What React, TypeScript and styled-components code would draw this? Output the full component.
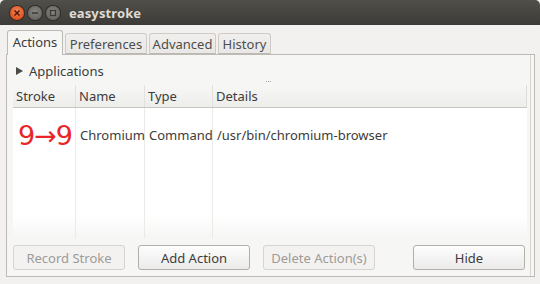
import React from "react";
import styled, { createGlobalStyle } from "styled-components";

const Global = createGlobalStyle`
  html, body { margin: 0; padding: 0; background: #f2f1f0; }
  body { font-family: "Noto Sans", "DejaVu Sans", sans-serif; }
`;

const Win = styled.div`
  width: 540px;
  height: 284px;
  display: flex;
  flex-direction: column;
  background: #f2f1f0;
  overflow: hidden;
`;

const TitleBar = styled.div`
  height: 25px;
  flex: none;
  display: flex;
  align-items: center;
  padding-left: 10px;
  gap: 2px;
  background: linear-gradient(#514f4a, #3c3b37);
  border-radius: 5px 5px 0 0;
`;

const WinBtn = styled.span<{ $kind: "close" | "min" | "max" }>`
  width: 14px;
  height: 14px;
  border-radius: 50%;
  display: inline-flex;
  align-items: center;
  justify-content: center;
  background: ${(p) =>
    p.$kind === "close"
      ? "radial-gradient(circle at 50% 40%, #f48a5a, #e0501e 70%, #b83c12)"
      : "radial-gradient(circle at 50% 40%, #85847f, #67665f 75%, #55544e)"};
  box-shadow: 0 0 0 1px #2e2d2a;
  margin-right: 2px;
`;

const Title = styled.span`
  margin-left: 5px;
  color: #dfdbd2;
  font-weight: bold;
  font-size: 13px;
  letter-spacing: 0.1px;
`;

const Body = styled.div`
  flex: 1;
  display: flex;
  flex-direction: column;
  padding: 5px 5px 7px 6px;
`;

const Tabs = styled.div`
  display: flex;
  align-items: flex-end;
  gap: 2px;
  padding-left: 1px;
  height: 24px;
  position: relative;
  z-index: 1;
`;

const Tab = styled.div<{ $active?: boolean; $w: number }>`
  width: ${(p) => p.$w}px;
  height: ${(p) => (p.$active ? 25 : 21)}px;
  box-sizing: border-box;
  border: 1px solid ${(p) => (p.$active ? "#bdbab4" : "#cfccc7")};
  border-bottom: ${(p) => (p.$active ? "none" : "1px solid #bdbab4")};
  border-radius: 3px 3px 0 0;
  background: ${(p) => (p.$active ? "#f6f6f5" : "linear-gradient(#f0efee, #e9e8e6)")};
  color: ${(p) => (p.$active ? "#3c3c3c" : "#4e4d4b")};
  font-size: 13px;
  display: flex;
  align-items: center;
  justify-content: center;
  padding-bottom: ${(p) => (p.$active ? 2 : 0)}px;
  margin-bottom: ${(p) => (p.$active ? -1 : 0)}px;
`;

const Page = styled.div`
  flex: 1;
  display: flex;
  flex-direction: column;
  border: 1px solid #bdbab4;
  background: #f6f6f5;
  padding: 6px 3px 6px 6px;
  box-shadow: inset -3px 0 0 #f6f6f5, inset -4px 0 0 #d8d6d2;
`;

const Expander = styled.div`
  display: flex;
  align-items: center;
  height: 20px;
  margin-left: 3px;
  color: #3c3c3c;
  font-size: 13px;
  gap: 6px;
`;

const Arrow = styled.span`
  width: 0;
  height: 0;
  border-top: 4px solid transparent;
  border-bottom: 4px solid transparent;
  border-left: 7px solid #4a4a48;
`;

const Handle = styled.div`
  height: 4px;
  display: flex;
  justify-content: center;
  align-items: flex-start;
  gap: 1px;
  padding-right: 8px;
`;

const Dot = styled.span`
  width: 1px;
  height: 1px;
  background: #a9a7a2;
`;

const List = styled.div`
  flex: 1;
  display: flex;
  flex-direction: column;
  margin-right: 4px;
  background: linear-gradient(#fff 0, #fff 85%, #f6f6f5 100%);
`;

const Cols = "63px 69px 68px 1fr";

const Header = styled.div`
  display: grid;
  grid-template-columns: ${Cols};
  height: 22px;
  background: linear-gradient(#f7f7f6, #ededeb);
  border-bottom: 1px solid #c8c6c1;
  border-right: 1px solid #dedcd8;
`;

const HeadCell = styled.div<{ $last?: boolean }>`
  display: flex;
  align-items: center;
  padding-left: 3px;
  font-size: 13px;
  color: #3c3c3c;
  border-right: ${(p) => (p.$last ? "none" : "1px solid #e3e1de")};
`;

const Row = styled.div`
  display: grid;
  grid-template-columns: ${Cols};
  height: 52px;
`;

const Cell = styled.div<{ $last?: boolean }>`
  display: flex;
  align-items: center;
  padding-left: 4px;
  padding-top: 2px;
  font-size: 13px;
  color: #3c3c3c;
  border-right: ${(p) => (p.$last ? "none" : "1px solid #eceae7")};
`;

const ColLines = styled.div`
  flex: 1;
  display: grid;
  grid-template-columns: ${Cols};
`;

const ColLine = styled.div<{ $last?: boolean }>`
  border-right: ${(p) => (p.$last ? "none" : "1px solid #eceae7")};
`;

const Stroke = styled.span`
  color: #e8262a;
  font-size: 27px;
  font-family: "DejaVu Sans", sans-serif;
  letter-spacing: -1px;
  margin-left: 1px;
`;

const Buttons = styled.div`
  display: flex;
  align-items: center;
  padding-top: 7px;
  padding-right: 6px;
  gap: 13px;
`;

const Btn = styled.button<{ $disabled?: boolean }>`
  width: 112px;
  height: 25px;
  box-sizing: border-box;
  border-radius: 3px;
  font-family: "Noto Sans", sans-serif;
  font-size: 13px;
  padding: 0;
  border: 1px solid ${(p) => (p.$disabled ? "#d6d4cf" : "#b2afa9")};
  color: ${(p) => (p.$disabled ? "#9d9b97" : "#3c3c3c")};
  background: ${(p) =>
    p.$disabled ? "#f3f2f1" : "linear-gradient(#fdfdfd, #ecebea)"};
  box-shadow: ${(p) => (p.$disabled ? "none" : "inset 0 1px 0 #fff")};
`;

const Spacer = styled.div`
  flex: 1;
`;

export default function App() {
  return (
    <Win>
      <Global />
      <TitleBar>
        <WinBtn $kind="close">
          <svg width="8" height="8" viewBox="0 0 8 8">
            <path d="M1.5 1.5L6.5 6.5M6.5 1.5L1.5 6.5" stroke="#4a1a08" strokeWidth="1.5" />
          </svg>
        </WinBtn>
        <WinBtn $kind="min">
          <svg width="8" height="8" viewBox="0 0 8 8">
            <path d="M1 4H7" stroke="#3b3a36" strokeWidth="1.5" />
          </svg>
        </WinBtn>
        <WinBtn $kind="max">
          <svg width="8" height="8" viewBox="0 0 8 8">
            <rect x="1.5" y="1.5" width="5" height="5" fill="none" stroke="#3b3a36" strokeWidth="1.2" />
          </svg>
        </WinBtn>
        <Title>easystroke</Title>
      </TitleBar>
      <Body>
        <Tabs>
          <Tab $active $w={56}>Actions</Tab>
          <Tab $w={82}>Preferences</Tab>
          <Tab $w={67}>Advanced</Tab>
          <Tab $w={53}>History</Tab>
        </Tabs>
        <Page>
          <Expander>
            <Arrow />
            Applications
          </Expander>
          <Handle>
            <Dot />
            <Dot />
            <Dot />
          </Handle>
          <List>
            <Header>
              <HeadCell>Stroke</HeadCell>
              <HeadCell>Name</HeadCell>
              <HeadCell>Type</HeadCell>
              <HeadCell $last>Details</HeadCell>
            </Header>
            <Row>
              <Cell>
                <Stroke>9→9</Stroke>
              </Cell>
              <Cell>Chromium</Cell>
              <Cell>Command</Cell>
              <Cell $last>/usr/bin/chromium-browser</Cell>
            </Row>
            <ColLines>
              <ColLine />
              <ColLine />
              <ColLine />
              <ColLine $last />
            </ColLines>
          </List>
          <Buttons>
            <Btn $disabled>Record Stroke</Btn>
            <Btn>Add Action</Btn>
            <Btn $disabled>Delete Action(s)</Btn>
            <Spacer />
            <Btn>Hide</Btn>
          </Buttons>
        </Page>
      </Body>
    </Win>
  );
}
